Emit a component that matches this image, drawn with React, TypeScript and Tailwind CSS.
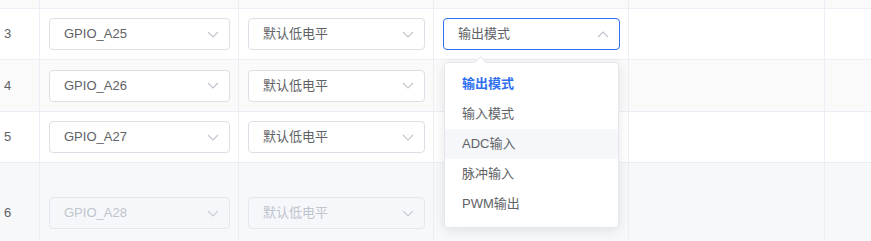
import React from "react";

const font = { fontFamily: '"Liberation Sans", "Noto Sans CJK SC", sans-serif' };

function Chevron({ up = false, disabled = false }: { up?: boolean; disabled?: boolean }) {
  return (
    <svg width="12" height="7" viewBox="0 0 12 7" className="shrink-0">
      <path
        d={up ? "M1 6 L6 1 L11 6" : "M1 1 L6 6 L11 1"}
        fill="none"
        stroke={disabled ? "#c9ccd3" : "#c0c4cc"}
        strokeWidth="1.1"
      />
    </svg>
  );
}

function Select({
  value,
  width,
  disabled = false,
  open = false,
}: {
  value: string;
  width: string;
  disabled?: boolean;
  open?: boolean;
}) {
  const cls = disabled
    ? "border-[#e4e7ed] bg-[#f5f7fa] text-[#c0c4cc]"
    : open
    ? "border-[#2f6ff0] bg-white text-[#606266]"
    : "border-[#dcdfe6] bg-white text-[#606266]";
  return (
    <div
      className={`${width} h-[32px] flex items-center justify-between rounded-[4px] border pl-[14px] pr-[10px] text-[13px] ${cls}`}
    >
      <span>{value}</span>
      <Chevron up={open} disabled={disabled} />
    </div>
  );
}

function Row({
  idx,
  gpio,
  level,
  mode,
  bg,
  h,
  disabled = false,
  open = false,
}: {
  idx: string;
  gpio?: string;
  level?: string;
  mode?: string;
  bg: string;
  h: string;
  disabled?: boolean;
  open?: boolean;
}) {
  return (
    <div className={`flex ${h} ${bg} border-b border-[#ebeef5]`}>
      <div className="w-[40px] border-r border-[#ebeef5] flex items-center pl-[4px] text-[13px] text-[#606266]">
        {idx}
      </div>
      <div className="w-[199px] border-r border-[#ebeef5] flex items-center pl-[9px]">
        {gpio && <Select value={gpio} width="w-[181px]" disabled={disabled} />}
      </div>
      <div className="w-[195px] border-r border-[#ebeef5] flex items-center pl-[9px]">
        {level && <Select value={level} width="w-[177px]" disabled={disabled} />}
      </div>
      <div className="w-[195px] border-r border-[#ebeef5] flex items-center pl-[9px]">
        {mode && <Select value={mode} width="w-[177px]" open={open} />}
      </div>
      <div className="w-[196px] border-r border-[#ebeef5]" />
      <div className="flex-1" />
    </div>
  );
}

export default function App() {
  const items = ["输出模式", "输入模式", "ADC输入", "脉冲输入", "PWM输出"];
  return (
    <div className="relative w-[871px] h-[241px] overflow-hidden bg-white" style={font}>
      <div className="flex h-[9px] bg-[#fafafa] border-b border-[#ebeef5]">
        <div className="w-[40px] border-r border-[#ebeef5]" />
        <div className="w-[199px] border-r border-[#ebeef5]" />
        <div className="w-[195px] border-r border-[#ebeef5]" />
        <div className="w-[195px] border-r border-[#ebeef5]" />
        <div className="w-[196px] border-r border-[#ebeef5]" />
        <div className="flex-1" />
      </div>
      <Row idx="3" gpio="GPIO_A25" level="默认低电平" mode="输出模式" bg="bg-white" h="h-[51px]" open />
      <Row idx="4" gpio="GPIO_A26" level="默认低电平" bg="bg-[#fafafa]" h="h-[52px]" />
      <Row idx="5" gpio="GPIO_A27" level="默认低电平" bg="bg-white" h="h-[51px]" />
      <Row idx="6" gpio="GPIO_A28" level="默认低电平" bg="bg-[#f7f8fa]" h="h-[101px]" disabled />

      <div className="absolute left-[444px] top-[62px] w-[175px] rounded-[4px] border border-[#e4e7ed] bg-white pt-[6px] pb-[8px] shadow-[0_2px_12px_0_rgba(0,0,0,0.1)]">
        <div className="absolute left-[31px] -top-[5px] w-[9px] h-[9px] rotate-45 bg-white border-l border-t border-[#e4e7ed]" />
        {items.map((it, i) => (
          <div
            key={it}
            className={`h-[30px] flex items-center pl-[17px] text-[13px] ${
              i === 0 ? "font-bold text-[#2f6ff0]" : "text-[#606266]"
            } ${i === 2 ? "bg-[#f5f7fa]" : ""}`}
          >
            {it}
          </div>
        ))}
      </div>
    </div>
  );
}
